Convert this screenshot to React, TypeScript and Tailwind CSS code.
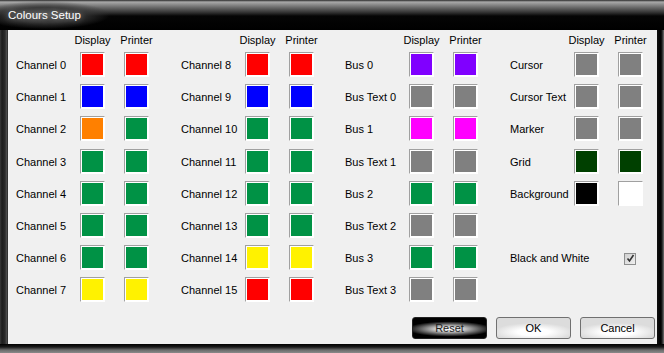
import React from "react";

type Row = { label: string; display?: string; printer?: string; check?: boolean };

const G = "#009245";
const GR = "#808080";

const columns: Row[][] = [
  [
    { label: "Channel 0", display: "#ff0000", printer: "#ff0000" },
    { label: "Channel 1", display: "#0000ff", printer: "#0000ff" },
    { label: "Channel 2", display: "#ff8000", printer: G },
    { label: "Channel 3", display: G, printer: G },
    { label: "Channel 4", display: G, printer: G },
    { label: "Channel 5", display: G, printer: G },
    { label: "Channel 6", display: G, printer: G },
    { label: "Channel 7", display: "#fff200", printer: "#fff200" },
  ],
  [
    { label: "Channel 8", display: "#ff0000", printer: "#ff0000" },
    { label: "Channel 9", display: "#0000ff", printer: "#0000ff" },
    { label: "Channel 10", display: G, printer: G },
    { label: "Channel 11", display: G, printer: G },
    { label: "Channel 12", display: G, printer: G },
    { label: "Channel 13", display: G, printer: G },
    { label: "Channel 14", display: "#fff200", printer: "#fff200" },
    { label: "Channel 15", display: "#ff0000", printer: "#ff0000" },
  ],
  [
    { label: "Bus 0", display: "#8000ff", printer: "#8000ff" },
    { label: "Bus Text 0", display: GR, printer: GR },
    { label: "Bus 1", display: "#ff00ff", printer: "#ff00ff" },
    { label: "Bus Text 1", display: GR, printer: GR },
    { label: "Bus 2", display: G, printer: G },
    { label: "Bus Text 2", display: GR, printer: GR },
    { label: "Bus 3", display: G, printer: G },
    { label: "Bus Text 3", display: GR, printer: GR },
  ],
  [
    { label: "Cursor", display: GR, printer: GR },
    { label: "Cursor Text", display: GR, printer: GR },
    { label: "Marker", display: GR, printer: GR },
    { label: "Grid", display: "#004000", printer: "#004000" },
    { label: "Background", display: "#000000", printer: "#ffffff" },
    { label: "" },
    { label: "Black and White", check: true },
    { label: "" },
  ],
];

const Swatch = ({ color }: { color: string }) => (
  <div className="w-[25px] h-[25px] shrink-0 border border-t-[#a0a0a0] border-l-[#a0a0a0] border-b-white border-r-white bg-white p-[1px]">
    <div className="w-full h-full" style={{ backgroundColor: color }} />
  </div>
);

const CheckBox = () => (
  <div className="w-[12px] h-[12px] border border-[#8e8f8f] bg-gradient-to-br from-[#d0d0d0] to-[#f0f0f0] flex items-center justify-center">
    <svg width="9" height="9" viewBox="0 0 9 9">
      <path d="M1.5 4.5 L3.5 7 L7.5 1" fill="none" stroke="#333" strokeWidth="1.6" />
    </svg>
  </div>
);

const Column = ({ rows }: { rows: Row[] }) => (
  <div className="w-[165px] shrink-0 flex flex-col">
    <div className="h-[16px] flex items-center">
      <div className="w-[64px] shrink-0" />
      <div className="w-[25px] shrink-0 flex justify-center"><span className="whitespace-nowrap">Display</span></div>
      <div className="w-[19px] shrink-0" />
      <div className="w-[25px] shrink-0 flex justify-center"><span className="whitespace-nowrap">Printer</span></div>
    </div>
    <div className="mt-[4px] flex flex-col gap-[7.2px]">
      {rows.map((r, i) => (
        <div key={i} className="h-[25px] flex items-center">
          <div className="w-[64px] shrink-0 whitespace-nowrap pt-[2px]">{r.label}</div>
          {r.display ? <Swatch color={r.display} /> : <div className="w-[25px] shrink-0" />}
          <div className="w-[19px] shrink-0" />
          {r.printer ? (
            <Swatch color={r.printer} />
          ) : r.check ? (
            <div className="w-[25px] shrink-0 flex justify-center pr-[1px] pt-[2px]"><CheckBox /></div>
          ) : null}
        </div>
      ))}
    </div>
  </div>
);

export default function App() {
  return (
    <div
      className="w-[664px] h-[353px] flex flex-col overflow-hidden bg-black text-black"
      style={{ fontFamily: '"Liberation Sans", Arial, sans-serif' }}
    >
      {/* title bar */}
      <div className="h-[30px] shrink-0 relative bg-[linear-gradient(to_bottom,#2a2a2a_0px,#a9a9a9_2px,#7a7a7a_6px,#2c2c2c_13px,#050505_16px,#000_30px)]">
        <div className="absolute left-0 top-0 w-[130px] h-[30px] bg-[radial-gradient(ellipse_65px_14px_at_45px_15px,rgba(80,80,80,1)_0%,rgba(55,55,55,0.9)_55%,rgba(40,40,40,0)_100%)]" />
        <span className="absolute left-[8px] top-[7px] text-[11.5px] text-white [text-shadow:0_0_6px_rgba(255,255,255,0.55)]">
          Colours Setup
        </span>
      </div>

      <div className="h-[314px] shrink-0 flex">
        <div className="w-[8px] shrink-0 bg-[linear-gradient(to_right,#3a3a3a_0px,#1c1c1c_2px,#2a2a2a_5px,#555_7px,#111_8px)]" />
        <div className="w-[649px] shrink-0 h-[314px] bg-[#f0f0f0] flex flex-col text-[11px] leading-[13px] overflow-hidden">
          <div className="pl-[8px] pt-[2px] flex">
            <Column rows={columns[0]} />
            <div className="w-[164px] shrink-0 flex">
              <Column rows={columns[1]} />
            </div>
            <Column rows={columns[2]} />
            <Column rows={columns[3]} />
          </div>
          <div className="mt-[15px] pr-[2px] flex justify-end gap-[9px]">
            <button className="w-[75px] h-[22px] rounded-[3px] border border-[#222] bg-[radial-gradient(ellipse_58%_38%_at_50%_55%,#ffffff_0%,#c8c8c8_35%,#000_100%)] text-[#222] text-[11px]">
              Reset
            </button>
            <button className="w-[75px] h-[22px] rounded-[3px] border border-[#707070] bg-[radial-gradient(ellipse_55%_45%_at_50%_70%,#ffffff_40%,#dcdcdc_100%)] text-[11px]">
              OK
            </button>
            <button className="w-[75px] h-[22px] rounded-[3px] border border-[#707070] bg-[radial-gradient(ellipse_55%_45%_at_50%_70%,#ffffff_40%,#dcdcdc_100%)] text-[11px]">
              Cancel
            </button>
          </div>
        </div>
        <div className="w-[7px] shrink-0 bg-[linear-gradient(to_right,#111_0px,#000_4px,#444_6px,#777_7px)]" />
      </div>
      <div className="h-[9px] shrink-0 bg-[linear-gradient(to_bottom,#000_0px,#1a1a1a_3px,#6a6a6a_6px,#8a8a8a_9px)]" />
    </div>
  );
}
